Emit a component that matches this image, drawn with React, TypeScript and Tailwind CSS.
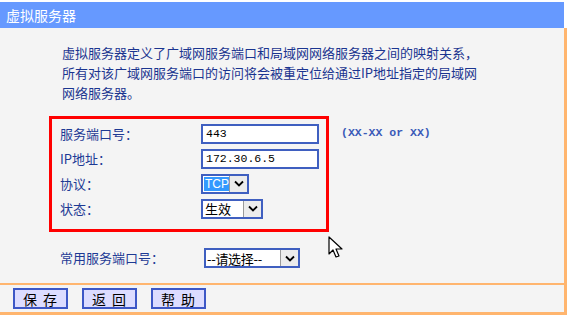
import React from "react";

const cjk = { fontFamily: '"Noto Sans CJK SC", "Noto Sans", sans-serif' };

function Chevron() {
  return (
    <svg width="10" height="7" viewBox="0 0 10 7">
      <path d="M1 1.5 L5 5.5 L9 1.5" fill="none" stroke="#000" strokeWidth="1.8" />
    </svg>
  );
}

function FakeSelect({ width, children }: { width: string; children: React.ReactNode }) {
  return (
    <div className={`flex h-[20px] ${width} border-2 border-[#3f5fc0] bg-white`}>
      <div className="flex min-w-0 flex-1 items-center">{children}</div>
      <div className="flex w-[18px] shrink-0 items-center justify-center border-l border-[#9a9a9a] bg-[#ececec]">
        <Chevron />
      </div>
    </div>
  );
}

function Row({ label, children }: { label: string; children: React.ReactNode }) {
  return (
    <div className="flex h-[25px] items-center">
      <div className="w-[141px] text-[13px] text-[#1d3a94]">{label}</div>
      {children}
    </div>
  );
}

function Btn({ text }: { text: string }) {
  return (
    <div className="flex h-[21px] w-[55px] items-center justify-center border-2 border-[#3d57c6] bg-[#dcdcff] pl-[5px] text-[14px] leading-none tracking-[6px] text-black">
      {text}
    </div>
  );
}

export default function App() {
  return (
    <div className="relative h-[315px] w-[567px] overflow-hidden bg-white" style={cjk}>
      {/* title */}
      <div className="mt-[2px] flex h-[26px] w-[564px] items-center bg-[#6699ff] pl-[6px] text-[14px] text-white">
        虚拟服务器
      </div>

      {/* body */}
      <div className="h-[255px] border-r-[3px] border-[#ffb56e] bg-[#f4f4f4] pt-[15px]">
        <p className="pl-[62px] text-[13px] leading-[20px] text-[#1b3590]">
          虚拟服务器定义了广域网服务端口和局域网网络服务器之间的映射关系，
          <br />
          所有对该广域网服务端口的访问将会被重定位给通过IP地址指定的局域网
          <br />
          网络服务器。
        </p>

        <div className="mt-[13px] flex items-start pl-[49px]">
          <div className="h-[116px] w-[280px] border-[3px] border-[#ff0000] pl-[8px] pt-[2px]">
            <Row label="服务端口号：">
              <div className="flex h-[20px] w-[118px] items-center border-2 border-[#3f5fc0] bg-white pl-[3px] text-[11.5px] leading-none text-black" style={{ fontFamily: '"Liberation Mono", monospace' }}>
                443
              </div>
            </Row>
            <Row label="IP地址：">
              <div className="flex h-[20px] w-[118px] items-center border-2 border-[#3f5fc0] bg-white pl-[3px] text-[11.5px] leading-none text-black" style={{ fontFamily: '"Liberation Mono", monospace' }}>
                172.30.6.5
              </div>
            </Row>
            <Row label="协议：">
              <FakeSelect width="w-[48px]">
                <span className="ml-[1px] bg-[#3399ff] px-[1px] text-[12px] leading-[14px] text-white" style={{ fontFamily: '"Liberation Sans", sans-serif' }}>
                  TCP
                </span>
              </FakeSelect>
            </Row>
            <Row label="状态：">
              <FakeSelect width="w-[62px]">
                <span className="pl-[2px] text-[13px] leading-none text-black">生效</span>
              </FakeSelect>
            </Row>
          </div>
          <div className="ml-[12px] mt-[7px] text-[11.5px] font-bold leading-[20px] text-[#3a5ab8]" style={{ fontFamily: '"Liberation Mono", monospace' }}>
            (XX-XX or XX)
          </div>
        </div>

        <div className="mt-[16px] flex h-[20px] items-center pl-[60px]">
          <div className="w-[144px] text-[13px] text-[#1d3a94]">常用服务端口号：</div>
          <FakeSelect width="w-[96px]">
            <span className="whitespace-nowrap pl-[1px] text-[13px] leading-none tracking-[-0.3px] text-black">--请选择--</span>
          </FakeSelect>
        </div>
      </div>

      {/* buttons bar */}
      <div className="h-[2px] w-full bg-[#ffb56e]" />
      <div className="flex h-[27px] gap-[14px] border-r-[3px] border-[#ffb56e] bg-[#f4f4f4] pl-[13px] pt-[3px]">
        <Btn text="保存" />
        <Btn text="返回" />
        <Btn text="帮助" />
      </div>
      <div className="h-[3px] w-full bg-[#ffb56e]" />

      {/* mouse pointer */}
      <svg className="absolute left-[328px] top-[236px]" width="17" height="24" viewBox="0 0 17 24">
        <path d="M1 1 L1 18 L5 14 L8 21 L11 20 L8 13 L14 13 Z" fill="#fff" stroke="#000" strokeWidth="1.2" strokeLinejoin="round" />
      </svg>
    </div>
  );
}
